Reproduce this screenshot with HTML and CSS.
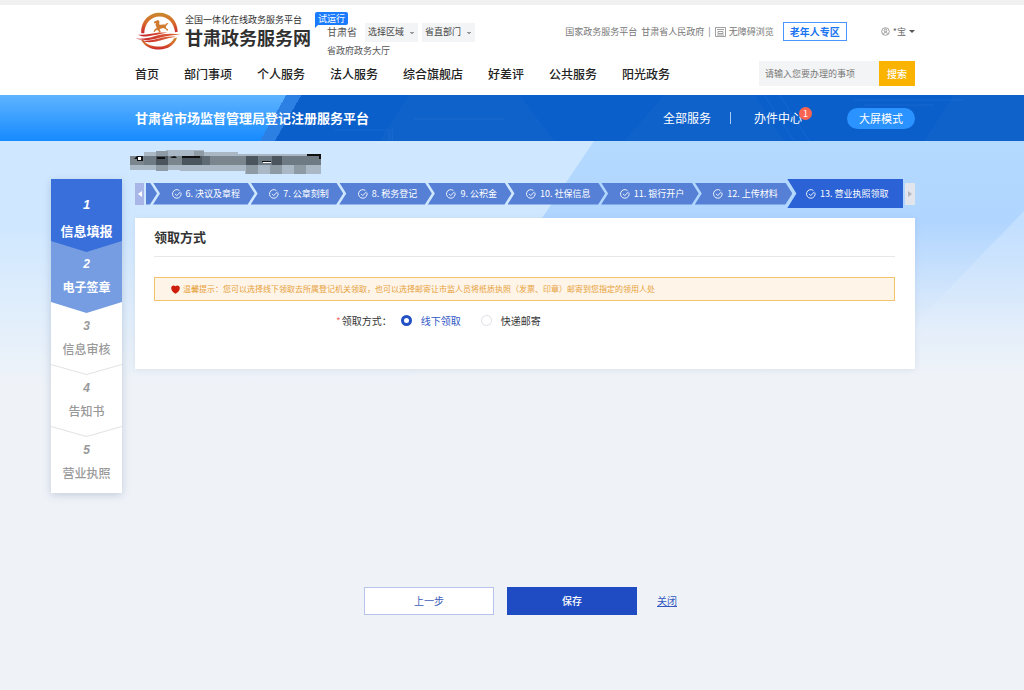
FILE: index.html
```html
<!DOCTYPE html>
<html lang="zh-CN">
<head>
<meta charset="utf-8">
<meta name="viewport" content="width=device-width, initial-scale=1">
<title>甘肃政务服务网</title>
<link rel="stylesheet" href="styles.css">
</head>
<body>
<svg width="0" height="0" class="sprite" aria-hidden="true">
  <symbol id="check" viewBox="0 0 10 10"><path d="M8.9 3.6A4.3 4.3 0 1 1 7.4 1.5M3 4.9l1.7 1.7L8.3 3" fill="none" stroke="currentColor" stroke-width="0.9"/></symbol>
</svg>
<header class="header">
  <div class="topbar">
    <a class="brand" href="#">
      <svg class="emblem" viewBox="48 34 136 114" aria-hidden="true">
        <defs>
          <linearGradient id="ring" x1="0" y1="0" x2="0" y2="1"><stop offset="0" stop-color="#c8892c"/><stop offset="0.5" stop-color="#d96a2b"/><stop offset="1" stop-color="#c9252b"/></linearGradient>
          <linearGradient id="wave" x1="0" y1="0" x2="1" y2="0"><stop offset="0" stop-color="#c4202a"/><stop offset="1" stop-color="#de6b35"/></linearGradient>
        </defs>
        <path d="M64 98C62 60 88 36 119 36c31 0 54 24 55 57l-8 2c-2-27-21-48-47-48-25 0-45 20-46 51z" fill="url(#ring)"/>
        <path d="M70 118c10 15 29 20 48 20 20 0 37-9 45-25l9-2c-7 23-28 36-53 36-26 0-47-11-55-29z" fill="url(#ring)"/>
        <path d="M48 114c24 1 40-2 58-8 27-8 51-9 77-4-25 0-46 4-67 10-24 7-46 9-68 2z" fill="url(#wave)"/>
        <path d="M54 102c25 2 38-3 54-5 13-2 23-1 36-1-17 2-29 5-43 8-17 5-33 5-47-2zM62 120c31 3 49-5 66-9 14-3 27-4 41-3-16 2-31 7-45 11-21 6-43 9-62 1z" fill="url(#wave)"/>
        <path d="M107 61l8-3 4 4-1 9c7 2 13 0 18 1l5-5 5 1-5 5-3 5 1 5 6 3-2 5-5-5-7-4-9 2-3 3 4 5-4 5-3-6-4-4-5 3-3 5-3-2 4-8 6-3-4-9 1-7-5 2-1-4z" fill="#cf7a2c"/>
      </svg>
      <span class="brand-text">
        <span class="brand-sub">全国一体化在线政务服务平台</span>
        <strong class="brand-name">甘肃政务服务网</strong>
      </span>
      <span class="trial">试运行</span>
    </a>
    <div class="region">
      <div class="region-row">
        <span class="province">甘肃省</span>
        <select class="picker" aria-label="选择区域"><option>选择区域</option></select>
        <select class="picker" aria-label="省直部门"><option>省直部门</option></select>
      </div>
      <a class="hall" href="#">省政府政务大厅</a>
    </div>
    <div class="links">
      <a href="#">国家政务服务平台</a>
      <a href="#">甘肃省人民政府</a>
      <span class="bar">|</span>
      <a class="access" href="#"><svg viewBox="0 0 11 10" width="11" height="10" aria-hidden="true"><path d="M.5.5h10v9H.5zM2 2.5h7M3 4.5h5v2H3zM2 8h7" fill="none" stroke="#888" stroke-width="0.8"/></svg>无障碍浏览</a>
      <a class="senior" href="#">老年人专区</a>
      <button class="user" type="button"><svg viewBox="0 0 9 9" width="9" height="9" aria-hidden="true"><circle cx="4.5" cy="4.5" r="3.8" fill="none" stroke="#777" stroke-width="0.7"/><path d="M3.2 3.5a1.3 1.3 0 1 1 2.6 0c0 .8-.5 1.4-1.3 1.4S3.2 4.3 3.2 3.5M2.6 7c.2-2.5 3.6-2.5 3.8 0" fill="none" stroke="#777" stroke-width="0.7"/></svg>*宝<i class="caret"></i></button>
    </div>
  </div>
  <div class="navbar">
    <nav class="nav">
      <a href="#">首页</a><a href="#">部门事项</a><a href="#">个人服务</a><a href="#">法人服务</a><a href="#">综合旗舰店</a><a href="#">好差评</a><a href="#">公共服务</a><a href="#">阳光政务</a>
    </nav>
    <form class="search">
      <input type="text" placeholder="请输入您要办理的事项" aria-label="搜索事项">
      <button type="button">搜索</button>
    </form>
  </div>
</header>

<div class="banner">
  <svg class="banner-art" viewBox="0 0 740 46" preserveAspectRatio="xMaxYMid slice" aria-hidden="true">
    <g fill="#fff" fill-opacity="0.025"><path d="M125 0h110l35 46H95zM340 46l40-46h90l30 46zM410 46q8-14 20-14t20 14zM640 46l30-46h70v46z"/></g>
    <g fill="none" stroke="#4f94e8" stroke-opacity="0.16"><path d="M50 35h55v11M108 46V34M480 0l30 46M495 0l30 46M570 5h110M580 10h70M130 24h90"/></g>
  </svg>
  <h1 class="banner-title">甘肃省市场监督管理局登记注册服务平台</h1>
  <div class="banner-menu">
    <a href="#">全部服务</a>
    <span class="divider"></span>
    <a class="center-link" href="#">办件中心<span class="count">1</span></a>
    <button class="big-screen" type="button">大屏模式</button>
  </div>
</div>

<main class="main">
  <svg class="masked" viewBox="0 0 191 24" width="191" height="24" role="img" aria-label="企业名称已遮挡">
    <path d="M0 6h14V2h22V0h38v2h34v2h83v20h-76v-3H50v-1H0z" fill="#a9b8c4"/>
    <path d="M26 1h12v20H26zM64 1h10v5H64zM116 15h12v9h-12zM140 15h12v9h-12zM164 15h12v9h-12z" fill="#8e9ba5"/>
    <path d="M0 6h14v9H0zM38 6h14v9H38zM80 6h36v9H80z" fill="#7a858d"/>
    <path d="M14 6h12v9H14zM128 6h14v9h-14zM152 6h39v9h-39z" fill="#6f7b84"/>
    <path d="M26 6h12v9H26zM52 6h20v9H52zM116 6h12v9h-12zM142 6h10v9h-10z" fill="#4b555e"/>
    <path d="M72 6h8v9h-8z" fill="#5e6b74"/>
    <path d="M4 9l3-3h6v5H7v-2zM27 7h8v2h-8zM40 7l5-1 2 2h-5zM52 6h18v2H52zM132 11h9v1h-9zM177 4h14v5h-2V6h-12z" fill="#111"/>
    <path d="M8 7h3v3H8zM133 12h8v1h-8z" fill="#fff"/>
  </svg>

  <ol class="stages">
    <li class="stage current"><span class="num">1</span><span class="name">信息填报</span></li>
    <li class="stage next"><span class="num">2</span><span class="name">电子签章</span></li>
    <li class="stage"><span class="num">3</span><span class="name">信息审核</span></li>
    <li class="stage"><span class="num">4</span><span class="name">告知书</span></li>
    <li class="stage"><span class="num">5</span><span class="name">营业执照</span></li>
  </ol>

  <div class="content">
    <div class="steps">
      <button class="scroll" type="button" aria-label="向左"><svg viewBox="0 0 4 6" width="4" height="6"><path d="M4 0v6L0 3z" fill="#fff"/></svg></button>
      <ol class="track">
        <li class="step stub"></li>
        <li class="step"><svg class="tick"><use href="#check"/></svg>6. 决议及章程</li>
        <li class="step"><svg class="tick"><use href="#check"/></svg>7. 公章刻制</li>
        <li class="step"><svg class="tick"><use href="#check"/></svg>8. 税务登记</li>
        <li class="step"><svg class="tick"><use href="#check"/></svg>9. 公积金</li>
        <li class="step"><svg class="tick"><use href="#check"/></svg>10. 社保信息</li>
        <li class="step"><svg class="tick"><use href="#check"/></svg>11. 银行开户</li>
        <li class="step"><svg class="tick"><use href="#check"/></svg>12. 上传材料</li>
        <li class="step active"><svg class="tick"><use href="#check"/></svg>13. 营业执照领取</li>
      </ol>
      <button class="scroll end" type="button" aria-label="向右"><svg viewBox="0 0 4 6" width="4" height="6"><path d="M0 0v6l4-3z" fill="#b5b5bb"/></svg></button>
    </div>

    <section class="card">
      <h2 class="card-title">领取方式</h2>
      <p class="notice"><svg viewBox="0 0 9 9" width="9" height="9" aria-hidden="true"><path d="M4.5 8.8C2.4 7.4.2 5.8.2 3 .2.3 3-.4 4.5 1.3 6-.4 8.8.3 8.8 3c0 2.8-2.2 4.4-4.3 5.8z" fill="#cf1d0c"/></svg>温馨提示：您可以选择线下领取去所属登记机关领取，也可以选择邮寄让市监人员将纸质执照（发票、印章）邮寄到您指定的领用人处</p>
      <div class="field" role="radiogroup" aria-labelledby="way">
        <span class="field-label" id="way"><span class="star">*</span>领取方式：</span>
        <label class="choice"><input type="radio" name="way" checked><span>线下领取</span></label>
        <label class="choice"><input type="radio" name="way"><span>快递邮寄</span></label>
      </div>
    </section>

    <div class="actions">
      <button class="btn" type="button">上一步</button>
      <button class="btn primary" type="button">保存</button>
      <a class="close" href="#">关闭</a>
    </div>
  </div>
</main>
</body>
</html>
```

FILE: styles.css
```css
* { box-sizing: border-box; }

body {
  margin: 0;
  min-height: 100vh;
  display: flex;
  flex-direction: column;
  background: #eff3f8;
  color: #333;
  font-family: "Noto Sans CJK SC", sans-serif;
  font-size: 10px;
  line-height: 16px;
}

button, input, select { font: inherit; margin: 0; padding: 0; border: 0; }
button { cursor: pointer; }
a { color: inherit; text-decoration: none; }
ol { list-style: none; margin: 0; padding: 0; }
.sprite { position: absolute; }

/* header */
.header {
  background: #fff;
  border-top: 5px solid #f1f1f2;
  padding: 5px 109px 9px 135px;
}
.topbar { display: flex; align-items: flex-start; height: 48px; }

.brand { position: relative; display: flex; flex: none; width: 181px; padding-top: 2px; gap: 4px; }
.emblem { width: 45px; height: 38px; margin-left: 1px; }
.brand-text { display: flex; flex-direction: column; color: #303030; white-space: nowrap; }
.brand-sub { font-size: 9px; line-height: 15px; }
.brand-name { font-size: 18px; line-height: 20px; font-weight: 700; }
.trial {
  position: absolute;
  left: 180px;
  top: 2px;
  width: 33px;
  height: 13px;
  background: #1b7bff;
  border-radius: 2px 2px 2px 0;
  color: #fff;
  font-size: 9px;
  line-height: 13px;
  text-align: center;
}
.trial::after {
  content: "";
  position: absolute;
  left: 0;
  top: 100%;
  border-top: 3px solid #1b7bff;
  border-right: 3px solid transparent;
}

.region { padding: 12px 0 0 11px; color: #555; }
.region-row { display: flex; align-items: center; height: 20px; }
.province { margin-right: 8px; }
.picker {
  appearance: none;
  width: 53px;
  height: 19px;
  padding-left: 3px;
  margin-right: 4px;
  border-radius: 0;
  background: #f3f4f5;
  color: #444;
  font-size: 9px;
  background-image: linear-gradient(#999, #999), linear-gradient(#999, #999);
  background-repeat: no-repeat;
  background-size: 4px 1px, 2px 1px;
  background-position: right 4px top 9px, right 5px top 10px;
}
.hall { display: block; font-size: 9px; line-height: 18px; }

.links {
  display: flex;
  align-items: center;
  margin-left: auto;
  padding-top: 12px;
  gap: 4px;
  color: #777;
  font-size: 9px;
  white-space: nowrap;
}
.bar { margin: 0; }
.access { display: flex; align-items: center; gap: 3px; }
.senior {
  margin-left: 5px;
  padding: 0 6px;
  height: 19px;
  border: 1px solid #4a94ff;
  color: #1b74f0;
  font-size: 10px;
  line-height: 17px;
  font-weight: 700;
}
.user { display: flex; align-items: center; gap: 3px; margin-left: 30px; background: none; color: #666; }
.caret { border: 3px solid transparent; border-top-color: #555; border-bottom: 0; }

.navbar { display: flex; align-items: center; justify-content: space-between; padding-top: 3px; }
.nav { display: flex; gap: 25px; color: #222; font-size: 12px; font-weight: 500; white-space: nowrap; }
.search { display: flex; width: 156px; height: 25px; }
.search input { flex: 1; min-width: 0; padding: 0 6px; background: #f3f4f5; color: #555; font-size: 9px; border-radius: 0; }
.search input::placeholder { color: #777; }
.search button { width: 36px; background: #fab400; color: #fff; font-weight: 500; }

/* banner */
.banner {
  position: relative;
  display: flex;
  align-items: center;
  justify-content: space-between;
  height: 46px;
  padding: 0 109px 0 135px;
  background:
    linear-gradient(120deg, transparent 248px, #2c80e4 248px 261px, #0b5fca 261px),
    linear-gradient(#5fb4ff, #168aff);
  color: #fff;
  font-size: 12px;
}
.banner-art { position: absolute; right: 0; top: 0; width: 72%; height: 100%; }
.banner-title { position: relative; margin: 0; font-size: 13px; line-height: 20px; font-weight: 700; }
.banner-menu { position: relative; display: flex; align-items: center; }
.divider { width: 1px; height: 12px; margin: 0 23px 0 19px; background: #a9cbf5; }
.center-link { position: relative; margin-right: 45px; }
.count {
  position: absolute;
  left: 45px;
  top: -3px;
  width: 13px;
  height: 13px;
  border-radius: 50%;
  background: #fb6450;
  font-size: 9px;
  line-height: 13px;
  text-align: center;
}
.big-screen { width: 68px; height: 21px; border-radius: 11px; background: #2b93ff; color: #fff; font-size: 11px; line-height: 21px; }

/* page body */
.main {
  position: relative;
  flex: 1;
  display: grid;
  grid-template-columns: 71px minmax(0, 1fr);
  grid-template-rows: auto 1fr;
  column-gap: 13px;
  row-gap: 5px;
  padding: 9px 109px 75px 51px;
  background: linear-gradient(#d0e8ff, #d0e8ff 90px, #eff3f8 245px);
}
.main::before, .main::after {
  content: "";
  position: absolute;
  inset: 0 0 auto 0;
  height: 240px;
}
.main::before {
  background: linear-gradient(#b5daff, #b0d5ff 80px, #e4eefa 190px, #eff3f8 235px);
  clip-path: polygon(58% 0, 100% 0, 100% 100%, 40% 100%, 53% 76px);
}
.main::after {
  background: linear-gradient(rgba(255, 255, 255, 0.25) 70px, rgba(255, 255, 255, 0) 210px);
  clip-path: polygon(100% 70px, 100% 100%, 84% 100%);
}
.main > * { position: relative; z-index: 1; }
.masked { grid-column: 2; margin-left: -5px; }

.stages { align-self: start; background: #fff; box-shadow: 0 2px 8px rgba(70, 90, 130, 0.25); }
.stage {
  position: relative;
  display: flex;
  flex-direction: column;
  align-items: center;
  padding: 16px 0 5px;
  background: #fff;
  color: #999;
}
.stage .num { font: italic 700 12px/16px "Liberation Sans", sans-serif; }
.stage .name { margin-top: 5px; font-size: 12px; line-height: 20px; font-weight: 500; }
.stage::after {
  content: "";
  position: absolute;
  z-index: 1;
  left: 0;
  top: 100%;
  width: 100%;
  height: 11px;
  background: #e2e2e4;
  clip-path: polygon(0 0, 50% 10px, 100% 0, 100% 1px, 50% 11px, 0 1px);
}
.stage:last-child { padding-bottom: 10px; }
.stage:last-child::after { display: none; }
.stage.current { padding: 18px 0 0; background: #396fdb; color: #fff; }
.stage.current .num { font-size: 13px; }
.stage.current .name { margin-top: 8px; font-size: 13px; font-weight: 700; }
.stage.next { padding-top: 15px; background: #769de1; color: #fff; }
.stage.next .name { font-weight: 700; }
.stage.current::after, .stage.next::after { background: inherit; clip-path: polygon(0 0, 50% 100%, 100% 0); }

.steps { display: flex; align-items: center; height: 29px; margin-bottom: 10px; }
.scroll { flex: none; display: flex; align-items: center; justify-content: center; width: 9px; height: 22px; margin-right: 2px; background: #a9b7e8; }
.scroll.end { width: 10px; margin: 0 0 0 2px; background: #e2e5ec; }
.track { flex: 1; display: flex; align-items: center; min-width: 0; overflow: hidden; }
.step {
  flex: 1 1 auto;
  display: flex;
  align-items: center;
  justify-content: center;
  gap: 4px;
  height: 22px;
  padding: 0 7px 0 11px;
  margin-left: -4px;
  background: #5580d6;
  color: #fff;
  font-size: 9px;
  white-space: nowrap;
  clip-path: polygon(0 0, calc(100% - 7px) 0, 100% 50%, calc(100% - 7px) 100%, 0 100%, 7px 50%);
}
.step.stub { flex: none; width: 11px; margin-left: 0; padding: 0; clip-path: polygon(0 0, 4px 0, 100% 50%, 4px 100%, 0 100%); }
.step.active {
  height: 29px;
  margin-left: -5px;
  background: #2b62d5;
  clip-path: polygon(0 0, 100% 0, 100% 100%, 0 100%, 9px 50%);
}
.tick { width: 10px; height: 10px; }

.card { padding: 9px 20px 38px 19px; background: #fff; box-shadow: 0 1px 6px rgba(90, 110, 150, 0.12); }
.card-title { margin: 0 0 20px; padding-bottom: 10px; border-bottom: 1px solid #e8e8e8; font-size: 13px; line-height: 19px; font-weight: 700; }
.notice {
  display: flex;
  align-items: center;
  gap: 3px;
  min-height: 24px;
  margin: 0;
  padding: 0 16px;
  border: 1px solid #f1c36c;
  background: #fef4e8;
  color: #e6a23c;
  font-size: 8px;
}
.notice svg { flex: none; }
.field { display: flex; align-items: center; margin-top: 9px; padding-left: 182px; height: 21px; }
.star { color: #f56c6c; margin-right: 1px; }
.field-label { margin-right: 9px; }
.field-label, .choice { display: flex; align-items: center; }
.choice { gap: 9px; margin-right: 20px; }
.choice input { appearance: none; width: 11px; height: 11px; border: 1px solid #dcdfe6; border-radius: 50%; background: #fff; }
.choice input:checked { border: 3px solid #2350c4; }
.choice input:checked + span { color: #2f57c5; }

.actions { display: flex; align-items: center; justify-content: center; margin-top: 218px; padding-right: 9px; }
.btn { width: 130px; height: 28px; margin-right: 13px; border: 1px solid #b7c3ec; background: #fff; color: #3c5cb8; }
.btn.primary { margin-right: 20px; border-color: #1f4bc3; background: #1f4bc3; color: #fff; font-weight: 500; }
.close { color: #3159c0; text-decoration: underline; }
```
